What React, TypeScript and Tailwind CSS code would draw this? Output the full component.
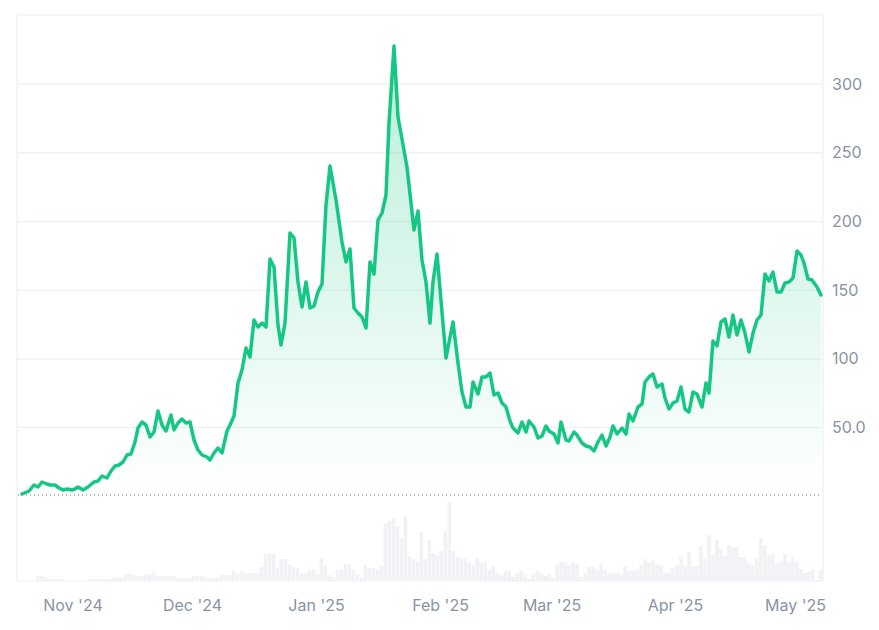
import React from "react";

const LINE = `22,494 29,491 34,485 38,487 42,482 47,484 50,485 55,485 59,488 63,490 67,489 72,490 75,489 78,487 83,490 88,487 94,482 98,481 102,476 107,478 111,471 115,466 119,465 123,462 127,455 131,454 135,442 138,428 142,422 146,425 150,437 154,432 158,411 162,425 166,431 171,415 174,430 178,423 182,419 186,423 190,422 194,440 198,450 202,455 207,457 210,460 214,453 218,448 222,453 227,431 230,425 234,416 238,383 242,370 246,348 250,357 254,320 258,327 262,323 266,327 270,259 274,267 278,325 281,345 285,323 290,233 294,238 298,282 302,307 306,282 310,308 314,306 318,292 322,284 326,205 330,166 336,200 342,242 346,262 350,249 354,308 358,313 362,317 366,328 370,262 374,274 378,220 382,213 386,195 389,123 394,46 398,117 407,167 414,230 418,211 422,260 426,282 430,323 433,282 437,254 446,358 453,322 458,363 462,392 466,407 470,407 473,382 478,394 482,377 486,377 490,373 494,395 498,393 502,403 506,407 510,421 513,428 518,433 522,422 526,432 529,421 534,427 538,438 542,436 546,426 549,431 554,434 558,443 561,422 566,440 569,441 574,432 577,435 582,443 586,446 590,447 594,451 598,442 602,435 606,446 610,437 613,426 617,434 622,428 626,434 629,414 633,421 638,407 642,404 645,382 649,377 653,374 657,387 662,384 665,398 669,409 673,403 677,401 681,387 685,409 689,412 693,392 697,394 702,407 706,383 709,393 713,341 717,346 721,322 725,319 729,337 733,315 737,335 741,320 745,333 749,352 753,333 757,320 761,315 765,274 769,281 773,272 777,292 781,292 785,283 789,282 793,278 797,251 801,255 804,263 808,279 812,280 817,287 821,295`;

// volume bars, one every 4px starting at x=36
const VOLUME = [
  5, 5, 4, 2, 2, 2, 2, 0, 0, 0, 0, 0, 0, 2, 2, 2, 2, 2, 2, 3, 4, 3, 7, 7, 6, 5, 5, 6, 7, 8, 5, 5, 5, 5, 5, 3, 3, 3,
  3, 5, 5, 5, 3, 3, 3, 3, 6, 6, 6, 10, 7, 10, 8, 8, 8, 8, 14, 27, 27, 27, 13, 22, 22,
  17, 14, 13, 8, 8, 11, 11, 7, 22, 16, 6, 4, 11, 11, 17, 17, 11, 7, 3, 16, 13, 13, 11, 15, 57, 60, 62, 54, 43, 65,
  25, 22, 19, 49, 22, 41, 28, 25, 30, 50, 79, 30, 24, 23, 22, 18, 16, 23, 18, 19, 11, 15, 8, 6, 10, 10, 4, 8, 10,
  6, 2, 7, 10, 8, 5, 7, 3, 16, 19, 19, 16, 19, 17, 4, 8,
  14, 14, 11, 17, 11, 7, 8, 8, 6, 15, 10, 10, 11, 16, 22, 18, 21, 17, 15, 8, 9, 13, 16, 24, 15, 29, 15, 15, 35, 22,
  46, 26, 41, 32, 25, 36, 33, 34, 24, 24, 18, 16, 22, 43, 36, 26, 27, 18, 19, 27, 19, 24, 19, 12, 8, 9, 11, 1, 11,
];

const GRID = [
  { y: 84, label: "300" },
  { y: 152.8, label: "250" },
  { y: 221.5, label: "200" },
  { y: 290.2, label: "150" },
  { y: 358.9, label: "100" },
  { y: 427.6, label: "50.0" },
];

const MONTHS = [
  { x: 73, label: "Nov '24" },
  { x: 192.5, label: "Dec '24" },
  { x: 316.5, label: "Jan '25" },
  { x: 440.5, label: "Feb '25" },
  { x: 552, label: "Mar '25" },
  { x: 675.5, label: "Apr '25" },
  { x: 795.5, label: "May '25" },
];

export default function App() {
  return (
    <div className="w-[879px] h-[630px] bg-white overflow-hidden">
      <svg width="879" height="630" viewBox="0 0 879 630" className="block font-['Inter',sans-serif]">
        <defs>
          <linearGradient id="priceFill" x1="0" y1="46" x2="0" y2="495" gradientUnits="userSpaceOnUse">
            <stop offset="0" stopColor="#16c784" stopOpacity="0.3" />
            <stop offset="1" stopColor="#16c784" stopOpacity="0" />
          </linearGradient>
        </defs>

        {/* frame */}
        <path d="M17 581V15H823V581" fill="none" stroke="#eff2f5" strokeWidth="1.5" />

        {GRID.map((g) => (
          <line key={g.y} x1="17" x2="823" y1={g.y} y2={g.y} stroke="#eff2f5" strokeWidth="1.5" />
        ))}

        {/* volume */}
        {VOLUME.map((h, i) => (
          <rect key={i} x={36 + i * 3.995} y={581 - h} width="3.6" height={h} fill="#f0f2f5" />
        ))}
        <line x1="17" x2="823" y1="581" y2="581" stroke="#eff2f5" strokeWidth="1" />

        <polygon points={`22,495 ${LINE} 821,495`} fill="url(#priceFill)" />
        <line x1="18" x2="822" y1="495" y2="495" stroke="#6b7280" strokeWidth="1" strokeDasharray="1 3" />
        <polyline points={LINE} fill="none" stroke="#16c784" strokeWidth="3.5" strokeLinejoin="round" strokeLinecap="round" />

        {GRID.map((g) => (
          <text key={g.label} x="832" y={g.y + 5.5} fontSize="16" fill="#8a93a6">
            {g.label}
          </text>
        ))}
        {MONTHS.map((m) => (
          <text key={m.label} x={m.x} y="611" fontSize="16" fill="#8a93a6" textAnchor="middle">
            {m.label}
          </text>
        ))}
      </svg>
    </div>
  );
}
